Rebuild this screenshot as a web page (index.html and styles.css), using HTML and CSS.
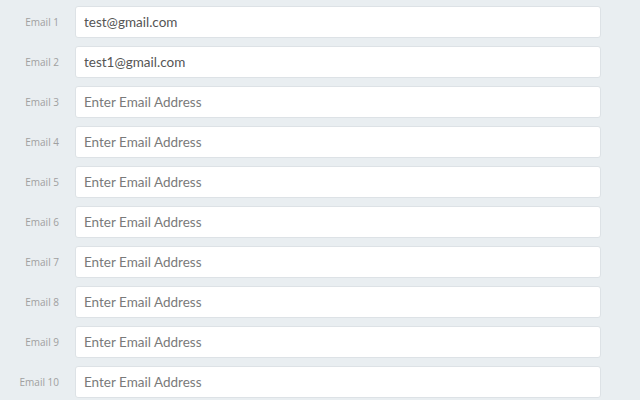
FILE: index.html
```html
<!DOCTYPE html>
<html>
<head>
<meta charset="utf-8">
<link rel="stylesheet" href="styles.css">
</head>
<body>
<form class="list">
  <div class="row"><label class="lbl">Email 1</label><input class="field" type="text" value="test@gmail.com" placeholder="Enter Email Address"></div>
  <div class="row"><label class="lbl">Email 2</label><input class="field" type="text" value="test1@gmail.com" placeholder="Enter Email Address"></div>
  <div class="row"><label class="lbl">Email 3</label><input class="field" type="text" placeholder="Enter Email Address"></div>
  <div class="row"><label class="lbl">Email 4</label><input class="field" type="text" placeholder="Enter Email Address"></div>
  <div class="row"><label class="lbl">Email 5</label><input class="field" type="text" placeholder="Enter Email Address"></div>
  <div class="row"><label class="lbl">Email 6</label><input class="field" type="text" placeholder="Enter Email Address"></div>
  <div class="row"><label class="lbl">Email 7</label><input class="field" type="text" placeholder="Enter Email Address"></div>
  <div class="row"><label class="lbl">Email 8</label><input class="field" type="text" placeholder="Enter Email Address"></div>
  <div class="row"><label class="lbl">Email 9</label><input class="field" type="text" placeholder="Enter Email Address"></div>
  <div class="row"><label class="lbl">Email 10</label><input class="field" type="text" placeholder="Enter Email Address"></div>
</form>
</body>
</html>
```
FILE: styles.css
```css
html, body {
  margin: 0;
  padding: 0;
  background: #e9eef1;
  font-family: "Open Sans", "DejaVu Sans", sans-serif;
}
.list {
  display: flex;
  flex-direction: column;
  gap: 8px;
  padding: 6px 0 0 0;
}
.row {
  display: flex;
  align-items: center;
  height: 32px;
}
.lbl {
  width: 59px;
  margin-top: -1px;
  text-align: right;
  font-size: 10px;
  color: #a0a0a0;
  padding-right: 16px;
  box-sizing: content-box;
}
.field {
  width: 526px;
  height: 32px;
  box-sizing: border-box;
  border: 1px solid #dde2e6;
  border-radius: 3px;
  background: #fff;
  padding: 0 8px;
  font-family: "Lato", "Open Sans", sans-serif;
  font-size: 13.5px;
  color: #555;
  outline: none;
  margin: 0;
}
.field::placeholder {
  color: #7a7a7a;
}
```
